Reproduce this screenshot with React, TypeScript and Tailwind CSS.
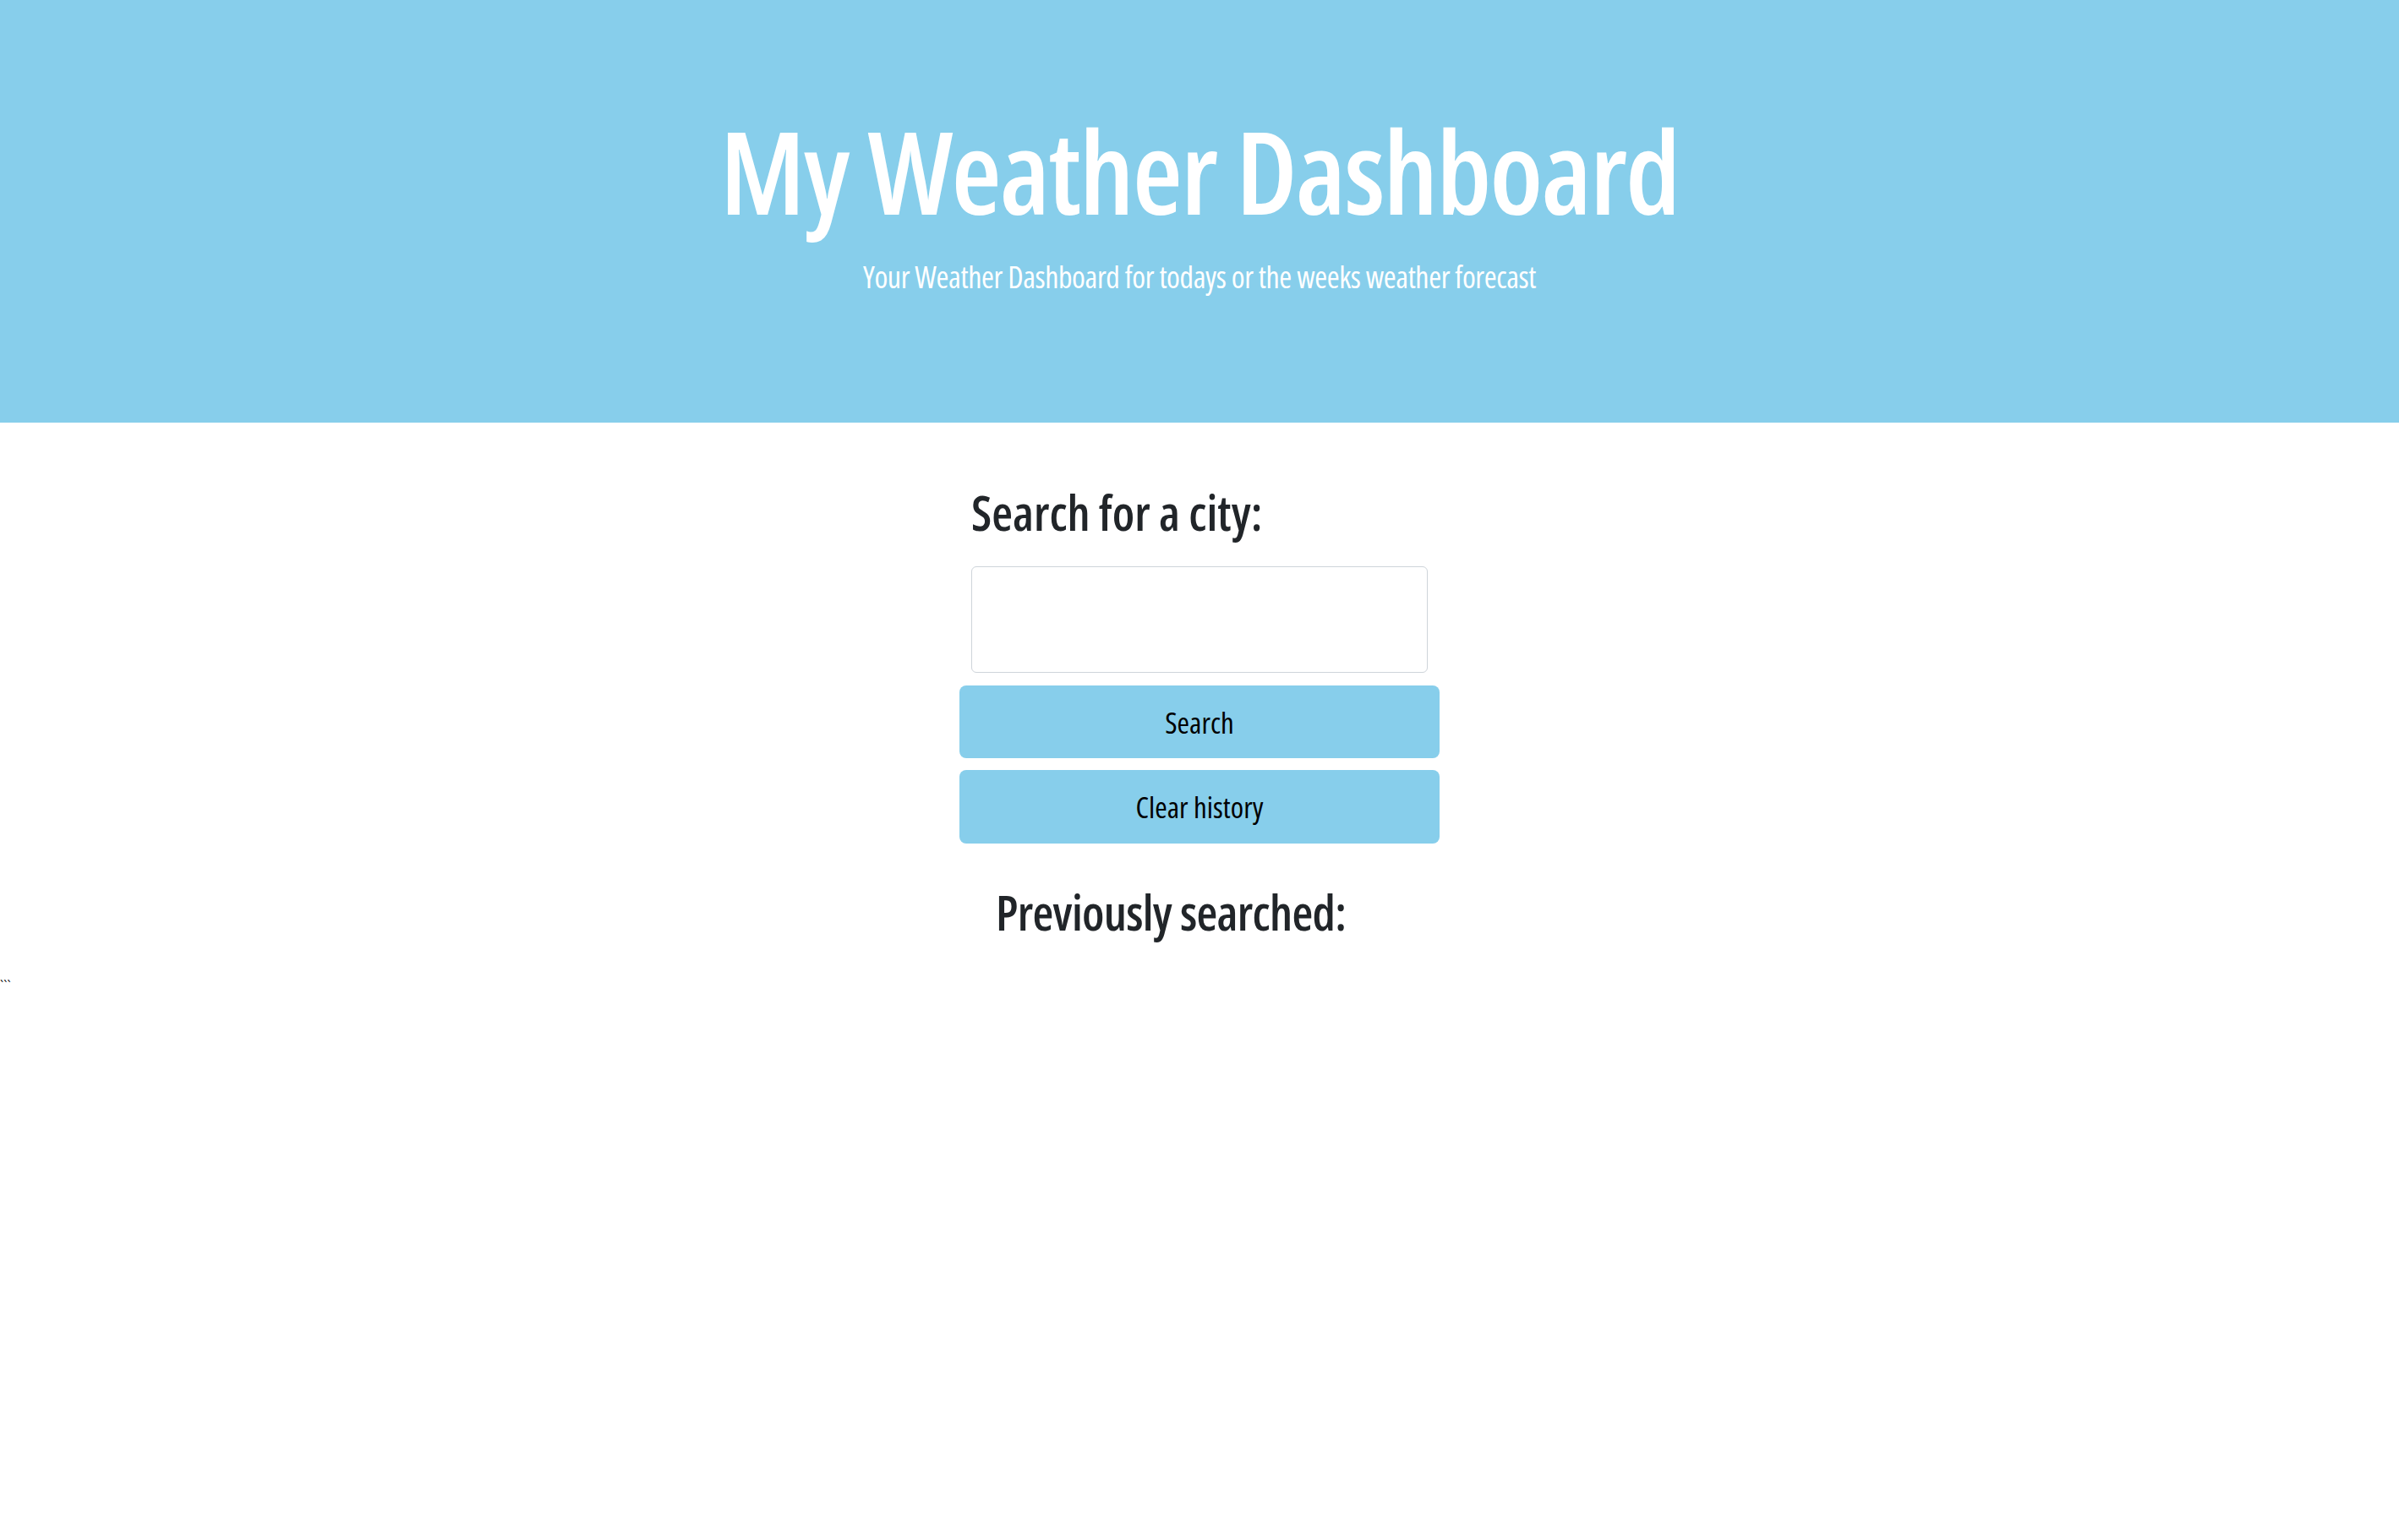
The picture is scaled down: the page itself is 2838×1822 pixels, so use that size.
export default function App() {
  return (
    <div className="min-h-screen bg-white font-['Open_Sans',sans-serif] [font-stretch:condensed]">
      {/* Header */}
      <header className="h-[500px] bg-[#87ceeb] pt-[134px] text-center text-white">
        <h1 className="text-[136px] font-semibold leading-none tracking-[-2px]">My Weather Dashboard</h1>
        <p className="mt-[40px] text-[36px] font-normal leading-none tracking-[-0.4px]">
          Your Weather Dashboard for todays or the weeks weather forecast
        </p>
      </header>

      {/* Search */}
      <main className="mx-auto w-[568px] pt-[78px]">
        <h2 className="pl-[14px] text-[57px] font-semibold leading-none text-[#212529]">
          Search for a city:
        </h2>
        <input
          type="text"
          className="mx-[14px] mt-[35px] block h-[126px] w-[540px] rounded-md border border-[#ced4da] bg-white px-4 text-[32px] outline-none"
        />
        <button className="mt-[15px] flex h-[86px] w-full items-center justify-center rounded-lg bg-[#87ceeb] text-[35px] font-medium leading-none text-black">
          Search
        </button>
        <button className="mt-[14px] flex h-[87px] w-full items-center justify-center rounded-lg bg-[#87ceeb] text-[35px] font-medium leading-none text-black">
          Clear history
        </button>
        <h2 className="ml-[43px] mt-[53px] text-[57px] font-semibold leading-none tracking-[-0.7px] text-[#212529]">
          Previously searched:
        </h2>
      </main>
      <div className="mt-[46px] text-[16px] leading-6 text-black">```</div>
    </div>
  );
}
